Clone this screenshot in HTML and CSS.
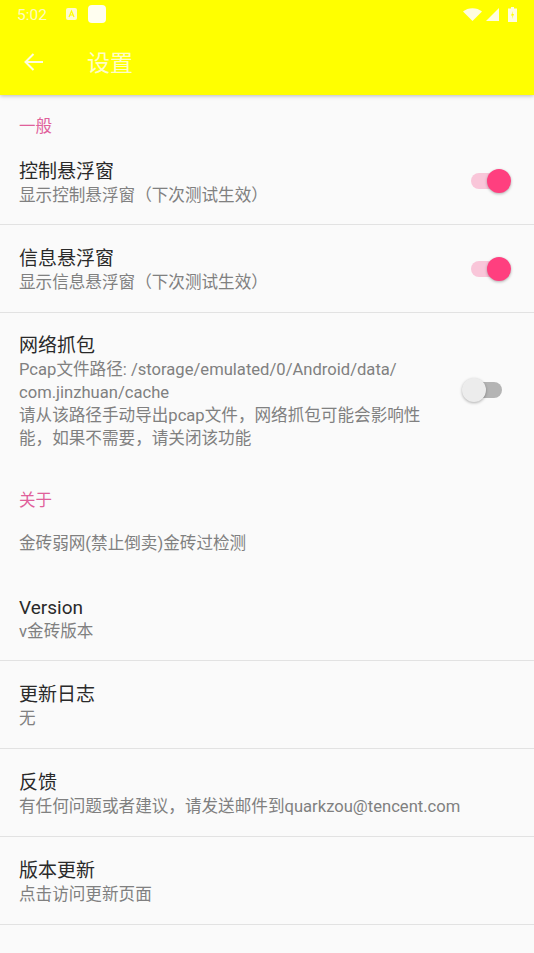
FILE: index.html
```html
<!DOCTYPE html>
<html lang="zh">
<head>
<meta charset="utf-8">
<title>设置</title>
<link rel="stylesheet" href="styles.css">
</head>
<body>
<header class="appbar">
  <div class="status">
    <span class="time">5:02</span>
    <svg class="ic-a" width="11" height="12" viewBox="0 0 11 12"><rect width="11" height="12" rx="2" fill="#fffbd0"/><path d="M3 9 5.500 3 8 9M4 7h3" fill="none" stroke="#ffff00" stroke-width="1.200"/></svg>
    <span class="white-square"></span>
    <span class="status-right">
      <svg width="19" height="13" viewBox="0 0 19 13"><path d="M0 3.500C5-1 14-1 19 3.500L9.500 13Z" fill="#fffde0"/></svg>
      <svg width="13" height="13" viewBox="0 0 13 13"><path d="M13 0V13H0Z" fill="#fffde0"/></svg>
      <svg class="batt" width="9" height="15" viewBox="0 0 9 15"><path d="M3 0h3v1.500h3V15H0V1.500h3Z" fill="#fffde0"/><path d="M5 4 3 8.500h1.500L4 12l2-5H4.500Z" fill="#ffff00"/></svg>
    </span>
  </div>
  <div class="toolbar">
    <svg class="back" width="19" height="18" viewBox="0 0 19 18"><path d="M19 9H2M9.500 1 1.500 9l8 8" fill="none" stroke="#fffde0" stroke-width="2"/></svg>
    <h1 class="title">设置</h1>
  </div>
</header>
<main class="list">
  <h2 class="cat">一般</h2>
  <section class="row">
    <div class="txt">
      <div class="name">控制悬浮窗</div>
      <div class="sum">显示控制悬浮窗（下次测试生效）</div>
    </div>
    <span class="sw on"><i></i></span>
  </section>
  <section class="row">
    <div class="txt">
      <div class="name">信息悬浮窗</div>
      <div class="sum">显示信息悬浮窗（下次测试生效）</div>
    </div>
    <span class="sw on"><i></i></span>
  </section>
  <section class="row tall">
    <div class="txt">
      <div class="name">网络抓包</div>
      <div class="sum">Pcap文件路径: /storage/emulated/0/Android/data/<br>com.jinzhuan/cache<br>请从该路径手动导出pcap文件，网络抓包可能会影响性<br>能，如果不需要，请关闭该功能</div>
    </div>
    <span class="sw off"><i></i></span>
  </section>
  <h2 class="cat about">关于</h2>
  <div class="note">金砖弱网(禁止倒卖)金砖过检测</div>
  <section class="row">
    <div class="txt">
      <div class="name">Version</div>
      <div class="sum">v金砖版本</div>
    </div>
  </section>
  <section class="row">
    <div class="txt">
      <div class="name">更新日志</div>
      <div class="sum">无</div>
    </div>
  </section>
  <section class="row">
    <div class="txt">
      <div class="name">反馈</div>
      <div class="sum">有任何问题或者建议，请发送邮件到quarkzou@tencent.com</div>
    </div>
  </section>
  <section class="row">
    <div class="txt">
      <div class="name">版本更新</div>
      <div class="sum">点击访问更新页面</div>
    </div>
  </section>
</main>
</body>
</html>
```
FILE: styles.css
```css
* { box-sizing: border-box; }
html, body { margin: 0; padding: 0; }
body {
  width: 534px;
  height: 953px;
  overflow: hidden;
  background: #fafafa;
  font-family: Roboto, "Noto Sans CJK SC", sans-serif;
  color: #212121;
}
.appbar {
  height: 95px;
  background: #ffff00;
  box-shadow: 0 1px 4px rgba(0, 0, 0, .25);
  position: relative;
}
.status {
  height: 29px;
  display: flex;
  align-items: center;
  padding: 0 17px;
  color: #fffbc0;
  font-size: 15.5px;
}
.time { width: 49px; }
.ic-a { margin-right: 11px; margin-bottom: 1px; }
.white-square {
  width: 18px;
  height: 18px;
  border-radius: 4px;
  background: #fffef0;
  margin-bottom: 1px;
}
.status-right {
  margin-left: auto;
  display: flex;
  align-items: center;
  gap: 4px;
  margin-bottom: 1px;
}
.batt { margin-left: 5px; }
.toolbar {
  height: 66px;
  display: flex;
  align-items: center;
  padding: 0 0 0 24px;
}
.back { flex: none; }
.title {
  margin: 0 0 2px 44px;
  font-size: 23px;
  font-weight: 400;
  color: #fffdc8;
}
.cat {
  margin: 0;
  height: 42px;
  padding: 21px 19px 0;
  font-size: 16.5px;
  line-height: 21px;
  font-weight: 400;
  color: #e0609a;
}
.row {
  height: 88px;
  display: flex;
  align-items: center;
  padding: 0 27px 0 19px;
  border-bottom: 1px solid #e2e2e2;
}
.row.tall {
  height: 176px;
  border-bottom: 0;
  padding-right: 32px;
}
.txt {
  flex: 1;
  align-self: flex-start;
  padding-top: 22px;
}
.cat + .row .txt,
.note + .row .txt { padding-top: 23px; }
.tall .txt { padding-top: 21px; }
.name {
  font-size: 19px;
  line-height: 24px;
  color: #2a2a2a;
}
.sum {
  font-size: 16.6px;
  line-height: 23px;
  color: #808080;
}
.sw {
  position: relative;
  width: 36px;
  height: 16px;
  border-radius: 8px;
  flex: none;
}
.sw i {
  position: absolute;
  top: -4px;
  width: 24px;
  height: 24px;
  border-radius: 50%;
  box-shadow: 0 1px 3px rgba(0, 0, 0, .3);
}
.sw.on { background: #f9c6d9; }
.sw.on i { right: -4px; background: #ff3f7f; }
.sw.off { background: #b4b4b4; margin-bottom: 22px; }
.sw.off i { left: -4px; background: #ececec; }
.about { padding-top: 1px; height: 23px; line-height: 22px; }
.note {
  height: 61px;
  padding: 20px 19px 0;
  font-size: 16.6px;
  line-height: 23px;
  color: #808080;
}
```
